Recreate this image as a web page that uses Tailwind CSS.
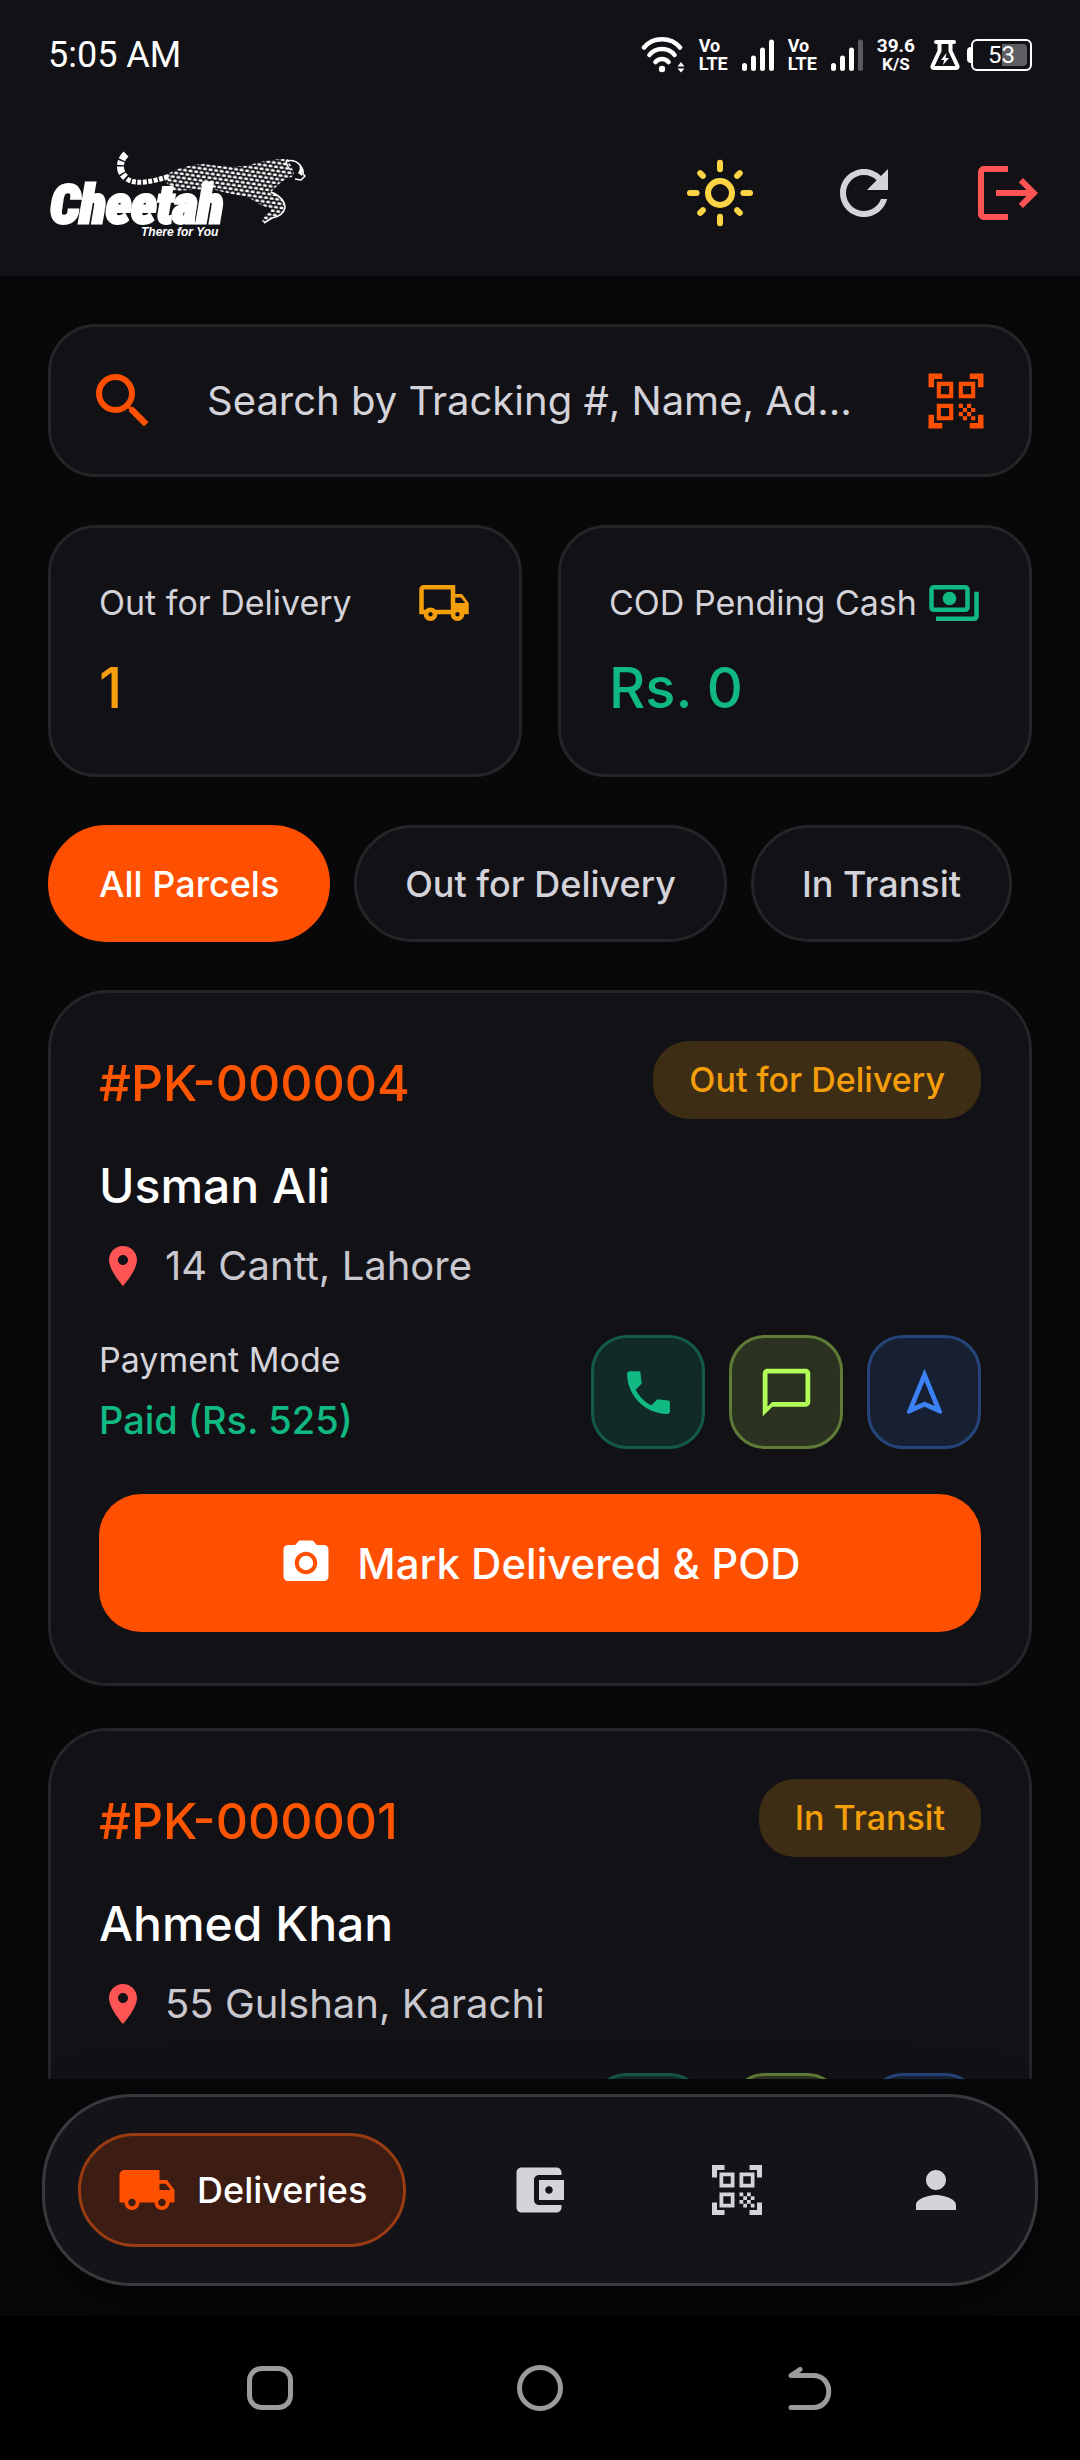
<!DOCTYPE html>
<html lang="en">
<head>
    <meta charset="UTF-8">
    <meta name="viewport" content="width=device-width, initial-scale=1.0">
    <title>Cheetah - Deliveries</title>
    <script src="https://cdn.jsdelivr.net/npm/@tailwindcss/browser@4"></script>
</head>
<body class="h-screen overflow-hidden flex flex-col bg-[#08080a] text-white font-[Inter,sans-serif]">

    <!-- Icon set -->
    <svg class="hidden" aria-hidden="true">
        <symbol id="i-search" viewBox="0 0 24 24"><path d="M15.5 14h-.79l-.28-.27A6.47 6.47 0 0 0 16 9.5 6.5 6.5 0 1 0 9.5 16c1.61 0 3.09-.59 4.23-1.57l.27.28v.79l5 4.99L20.49 19l-4.99-5zm-6 0C7.01 14 5 11.99 5 9.5S7.01 5 9.5 5 14 7.01 14 9.5 11.99 14 9.5 14z"/></symbol>
        <symbol id="i-qr" viewBox="0 0 24 24"><path d="M9.5 6.5v3h-3v-3h3M11 5H5v6h6V5zm-1.5 9.5v3h-3v-3h3M11 13H5v6h6v-6zm6.5-6.5v3h-3v-3h3M19 5h-6v6h6V5zm-6 8h1.5v1.5H13V13zm1.5 1.5H16V16h-1.5v-1.5zM16 13h1.5v1.5H16V13zm-3 3h1.5v1.5H13V16zm1.5 1.5H16V19h-1.5v-1.5zM16 16h1.5v1.5H16V16zm1.5-1.5H19V16h-1.5v-1.5zm0 3H19V19h-1.5v-1.5zM22 7h-2V4h-3V2h5v5zm0 15v-5h-2v3h-3v2h5zM2 22h5v-2H4v-3H2v5zM2 2v5h2V4h3V2H2z"/></symbol>
        <symbol id="i-pin" viewBox="0 0 24 24"><path d="M12 2C8.13 2 5 5.13 5 9c0 5.25 7 13 7 13s7-7.75 7-13c0-3.87-3.13-7-7-7zm0 9.5c-1.38 0-2.5-1.12-2.5-2.5s1.12-2.5 2.5-2.5 2.5 1.12 2.5 2.5-1.12 2.5-2.5 2.5z"/></symbol>
        <symbol id="i-phone" viewBox="0 0 24 24"><path d="M4 3h3.9c.4 0 .65.2.7.6l.55 4.65-2.53 2.54c1.44 2.83 3.76 5.14 6.59 6.59l2.52-2.52 4.5.5c.5.06.77.4.77.9V20c0 .55-.45 1-1 1C10.61 21 3 13.39 3 4c0-.55.45-1 1-1z"/></symbol>
        <symbol id="i-chat" viewBox="0 0 24 24"><path d="M20 2H4c-1.1 0-2 .9-2 2v18l4-4h14c1.1 0 2-.9 2-2V4c0-1.1-.9-2-2-2zm0 14H6l-2 2V4h16v12z"/></symbol>
        <symbol id="i-nav" viewBox="0 0 24 24"><path d="M12 7.27l4.28 10.43-3.47-1.53-.81-.36-.81.36-3.47 1.53L12 7.27M12 2L4.5 20.29l.71.71L12 18l6.79 3 .71-.71L12 2z"/></symbol>
        <symbol id="i-camera" viewBox="0 0 24 24"><circle cx="12" cy="12" r="3.2"/><path d="M9 2L7.17 4H4c-1.1 0-2 .9-2 2v12c0 1.1.9 2 2 2h16c1.1 0 2-.9 2-2V6c0-1.1-.9-2-2-2h-3.17L15 2H9zm3 15c-2.76 0-5-2.24-5-5s2.24-5 5-5 5 2.24 5 5-2.24 5-5 5z"/></symbol>
    </svg>

    <!-- Header -->
    <header class="bg-[#121116] shrink-0">
        <div class="h-[110px] px-12 flex items-center justify-between font-[Roboto,sans-serif]">
            <span class="text-[36px] leading-10">5:05 AM</span>
            <div class="flex items-center gap-3.5">
                <svg class="w-11 h-9" viewBox="0 0 44 36" fill="none" stroke="#fff" stroke-width="4.5" stroke-linecap="round">
                    <path d="M3 10.5C12-.5 30-.5 39 10.5M8.5 18C14.5 10 27.5 10 33.5 18M14.5 25C18 21 24 21 27.5 25"/>
                    <circle cx="21" cy="32" r="3.2" fill="#fff" stroke="none"/>
                    <path d="M36.5 29.5l3.500-4.500 3.500 4.500zM36.500 31.500l3.500 4 3.500-4z" fill="#fff" stroke="none"/>
                </svg>
                <span class="flex flex-col font-bold text-[18px] leading-[18px]"><span>Vo</span><span>LTE</span></span>
                <svg class="w-8 h-8" viewBox="0 0 32 32" stroke="#fff" stroke-width="5" stroke-linecap="round">
                    <path d="M2.5 26.5v3M11.5 19v10.5M20.5 11v18.5M29.5 3v26.5"/>
                </svg>
                <span class="flex flex-col font-bold text-[18px] leading-[18px]"><span>Vo</span><span>LTE</span></span>
                <svg class="w-8 h-8" viewBox="0 0 32 32" stroke="#fff" stroke-width="5" stroke-linecap="round">
                    <path d="M2.5 26.5v3M11.5 19v10.5M20.5 11v18.5"/><path d="M29.5 3v26.5" stroke="#5a595d"/>
                </svg>
                <span class="flex flex-col items-center font-bold text-[19px] leading-[18px]"><span>39.6</span><span class="text-[17px]">K/S</span></span>
                <div class="flex items-center gap-1.5">
                    <svg class="w-8 h-8" viewBox="0 0 32 32" fill="none" stroke="#fff" stroke-width="4" stroke-linejoin="round" stroke-linecap="round">
                        <path d="M7 3h18M10.500 3v9L3.500 27q-.5 2 1.500 2h22q2 0 1.500-2L21.500 12V3"/>
                        <path d="M17.500 14l-5.500 7h3l-1 5 6-7h-3.500z" fill="#fff" stroke="none"/>
                    </svg>
                    <div class="flex items-center">
                        <div class="w-1 h-4 rounded-l bg-white"></div>
                        <div class="w-[61px] h-8 rounded-md border-2 border-white p-[3px] flex">
                            <div class="flex-1 flex items-center justify-center rounded-sm bg-linear-to-r from-transparent from-50% to-[#5f5e62] to-50% text-[24px] leading-none">53</div>
                        </div>
                    </div>
                </div>
            </div>
        </div>

        <div class="h-[166px] pl-12 flex items-center justify-between">
            <svg class="w-[262px] h-[90px]" viewBox="48 147 262 90" role="img" aria-label="Cheetah, There for You">
                <defs>
                    <pattern id="coat" width="5.600" height="8" patternUnits="userSpaceOnUse" patternTransform="rotate(8)">
                        <rect x=".4" y=".4" width="4" height="2.700" rx="1.200" fill="#fff"/>
                        <rect x="-2.400" y="4.400" width="4" height="2.700" rx="1.200" fill="#fff"/>
                        <rect x="3.200" y="4.400" width="4" height="2.700" rx="1.200" fill="#fff"/>
                    </pattern>
                </defs>
                <path d="M126 153C119 160 118 170 126 177" fill="none" stroke="#fff" stroke-width="7" stroke-dasharray="7 1.500 4 1.500"/>
                <path d="M127 178C136 184 152 181 170 175" fill="none" stroke="#fff" stroke-width="5" stroke-dasharray="4 1.500"/>
                <path d="M163 176C172 169 186 164 205 163C215 165 238 167 250 164C262 160 274 158 288 158L294 172L292 176C285 177 280 182 271 191C280 194 286 200 285 207C284 213 277 216 272 217L265 222L262 220L265 214L271 210L270 207C262 205 256 202 250 197C238 194 226 192 212 188L172 190z" fill="url(#coat)"/>
                <path d="M286 160q9-2 14 4q4 5 3 9l2 2l-4 4l-6-1M286 160q1 6 5 9M271 191q14 6 14 16q-2 8-13 10l-8 5" fill="none" stroke="#fff" stroke-width="1.500"/>
                <path d="M299 163q5 6 3 12l-4-3q3-4 1-9z" fill="#fff"/>
                <text x="50" y="222" font-family="Liberation Sans Narrow, Roboto Condensed, sans-serif" font-size="54" font-weight="900" font-style="italic" fill="#fff" stroke="#fff" stroke-width="3">Cheetah</text>
                <text x="141" y="235" font-family="Liberation Sans, sans-serif" font-size="12" font-weight="700" font-style="italic" fill="#fff">There for You</text>
            </svg>
            <div class="flex">
                <button class="size-36 flex items-center justify-center" aria-label="Toggle theme">
                    <svg class="size-18" viewBox="0 0 24 24" fill="none" stroke="#fdd446" stroke-width="2" stroke-linecap="round">
                        <circle cx="12" cy="12" r="4"/>
                        <path d="M2 12h2.200M19.800 12H22M12 1.900v2.200M12 19.900v2.200M5.400 5.400l.9.900M17.700 17.700l.9.900M5.400 18.600l.9-.9M17.700 6.300l.9-.9"/>
                    </svg>
                </button>
                <button class="size-36 flex items-center justify-center" aria-label="Refresh">
                    <svg class="size-18 fill-[#d4d3da]" viewBox="0 0 24 24"><path d="M17.650 6.350C16.200 4.900 14.210 4 12 4c-4.420 0-7.990 3.580-7.990 8s3.570 8 7.990 8c3.730 0 6.840-2.550 7.730-6h-2.080c-.82 2.330-3.040 4-5.650 4-3.310 0-6-2.690-6-6s2.690-6 6-6c1.660 0 3.140.69 4.220 1.780L13 11h7V4l-2.350 2.350z"/></svg>
                </button>
                <button class="size-36 flex items-center justify-center" aria-label="Log out">
                    <svg class="size-18 fill-[#ff5454]" viewBox="0 0 24 24"><path d="M17 7l-1.410 1.410L18.170 11H8v2h10.170l-2.580 2.580L17 17l5-5zM4 5h8V3H4c-1.100 0-2 .9-2 2v14c0 1.100.9 2 2 2h8v-2H4V5z"/></svg>
                </button>
            </div>
        </div>
    </header>

    <main class="flex-1 min-h-0 overflow-hidden px-12 pt-12">
        <!-- Search -->
        <form class="h-[153px] pl-9 pr-10 flex items-center gap-12 bg-[#121116] border-3 border-[#252427] rounded-[48px]">
            <svg class="size-18 shrink-0 fill-[#ff4f00]"><use href="#i-search"/></svg>
            <input type="text" aria-label="Search parcels" placeholder="Search by Tracking #, Name, Ad…" class="flex-1 min-w-0 bg-transparent outline-none text-[40px] leading-14 placeholder:text-[#d4d3da] placeholder:opacity-100">
            <button type="button" aria-label="Scan code" class="shrink-0"><svg class="size-[66px] fill-[#ff4f00]"><use href="#i-qr"/></svg></button>
        </form>

        <!-- Stats -->
        <div class="mt-12 grid grid-cols-2 gap-9">
            <div class="p-12 bg-[#121116] border-3 border-[#252427] rounded-[48px]">
                <div class="flex items-center justify-between text-[34px] leading-[54px] text-[#d4d3da]">
                    <span class="whitespace-nowrap">Out for Delivery</span>
                    <svg class="size-[54px] shrink-0 fill-[#f59e0b]" viewBox="0 0 24 24"><path d="M20 8h-3V4H3c-1.100 0-2 .9-2 2v11h2c0 1.660 1.340 3 3 3s3-1.340 3-3h6c0 1.660 1.340 3 3 3s3-1.340 3-3h2v-5l-3-4zm-.5 1.500l1.960 2.500H17V9.500h2.500zM6 18c-.55 0-1-.45-1-1s.45-1 1-1 1 .45 1 1-.45 1-1 1zm2.220-3c-.55-.61-1.330-1-2.220-1s-1.670.39-2.220 1H3V6h12v9H8.220zM18 18c-.55 0-1-.45-1-1s.45-1 1-1 1 .45 1 1-.45 1-1 1z"/></svg>
                </div>
                <div class="mt-5 text-[56px] leading-19 font-medium text-[#f59e0b]">1</div>
            </div>
            <div class="p-12 bg-[#121116] border-3 border-[#252427] rounded-[48px]">
                <div class="flex items-center justify-between text-[34px] leading-[54px] text-[#d4d3da]">
                    <span class="whitespace-nowrap">COD Pending Cash</span>
                    <svg class="size-[54px] shrink-0 fill-[#10b981]" viewBox="0 0 24 24"><path d="M19 14V6c0-1.100-.9-2-2-2H3c-1.100 0-2 .9-2 2v8c0 1.100.9 2 2 2h14c1.100 0 2-.9 2-2zm-2 0H3V6h14v8zm-7-7c-1.660 0-3 1.340-3 3s1.340 3 3 3 3-1.340 3-3-1.340-3-3-3zm13 0v11c0 1.100-.9 2-2 2H4v-2h17V7h2z"/></svg>
                </div>
                <div class="mt-5 text-[56px] leading-19 font-medium text-[#10b981]">Rs. 0</div>
            </div>
        </div>

        <!-- Filters -->
        <div class="mt-12 flex gap-6 text-[36px] leading-12 font-medium whitespace-nowrap">
            <button class="h-[117px] px-12 rounded-full border-3 border-[#ff4f00] bg-[#ff4f00]">All Parcels</button>
            <button class="h-[117px] px-12 rounded-full border-3 border-[#252427] bg-[#121116] text-[#d4d3da]">Out for Delivery</button>
            <button class="h-[117px] px-12 rounded-full border-3 border-[#252427] bg-[#121116] text-[#d4d3da]">In Transit</button>
        </div>

        <!-- Parcels -->
        <div class="mt-12 flex flex-col gap-[42px]">
            <article class="p-12 bg-[#121116] border-3 border-[#252427] rounded-[60px]">
                <div class="flex items-end justify-between">
                    <span class="text-[50px] leading-18 font-medium text-[#ff5500]">#PK-000004</span>
                    <span class="px-9 rounded-[36px] bg-[#3d2d14] text-[34px] leading-[78px] font-medium text-[#f59e0b]">Out for Delivery</span>
                </div>
                <h2 class="mt-9 text-[48px] leading-[62px] font-medium">Usman Ali</h2>
                <p class="mt-[22px] flex items-center gap-[18px] text-[40px] leading-[54px] text-[#c9c8cf]">
                    <svg class="size-12 fill-[#ff5454]"><use href="#i-pin"/></svg>14 Cantt, Lahore
                </p>
                <div class="mt-[42px] flex items-center justify-between">
                    <div class="flex flex-col gap-3">
                        <span class="text-[34px] leading-11 text-[#d4d3da]">Payment Mode</span>
                        <span class="text-[38px] leading-13 font-medium text-[#10b981]">Paid (Rs. 525)</span>
                    </div>
                    <div class="flex gap-6">
                        <button aria-label="Call" class="size-[114px] flex items-center justify-center rounded-[36px] bg-[#122a26] border-3 border-[#14594a]"><svg class="size-[57px] fill-[#10b981]"><use href="#i-phone"/></svg></button>
                        <button aria-label="Message" class="size-[114px] flex items-center justify-center rounded-[36px] bg-[#2b3320] border-3 border-[#607b38]"><svg class="size-[57px] fill-[#b2ff59]"><use href="#i-chat"/></svg></button>
                        <button aria-label="Navigate" class="size-[114px] flex items-center justify-center rounded-[36px] bg-[#172033] border-3 border-[#26437a]"><svg class="size-[57px] fill-[#3b82f6]"><use href="#i-nav"/></svg></button>
                    </div>
                </div>
                <button class="mt-[45px] mb-[3px] w-full h-[138px] flex items-center justify-center gap-6 rounded-[42px] bg-[#ff4f00] text-[42px] font-medium">
                    <svg class="size-[54px] fill-white"><use href="#i-camera"/></svg>Mark Delivered &amp; POD
                </button>
            </article>

            <article class="p-12 bg-[#121116] border-3 border-[#252427] rounded-[60px]">
                <div class="flex items-end justify-between">
                    <span class="text-[50px] leading-18 font-medium text-[#ff5500]">#PK-000001</span>
                    <span class="px-9 rounded-[36px] bg-[#3d2d14] text-[34px] leading-[78px] font-medium text-[#f59e0b]">In Transit</span>
                </div>
                <h2 class="mt-9 text-[48px] leading-[62px] font-medium">Ahmed Khan</h2>
                <p class="mt-[22px] flex items-center gap-[18px] text-[40px] leading-[54px] text-[#c9c8cf]">
                    <svg class="size-12 fill-[#ff5454]"><use href="#i-pin"/></svg>55 Gulshan, Karachi
                </p>
                <div class="mt-[42px] flex items-center justify-end gap-6">
                    <button aria-label="Call" class="size-[114px] rounded-[36px] bg-[#122a26] border-3 border-[#14594a]"></button>
                    <button aria-label="Message" class="size-[114px] rounded-[36px] bg-[#2b3320] border-3 border-[#607b38]"></button>
                    <button aria-label="Navigate" class="size-[114px] rounded-[36px] bg-[#172033] border-3 border-[#26437a]"></button>
                </div>
            </article>
        </div>
    </main>

    <!-- Bottom navigation -->
    <div class="shrink-0 px-[42px] pt-[15px] pb-[30px]">
        <nav class="relative h-48 px-[33px] flex items-center justify-between rounded-[90px] bg-[#141318] border-3 border-[#39383c] shadow-[0_24px_60px_rgba(0,0,0,0.5)]">
            <a href="#" class="h-[114px] px-9 flex items-center gap-5 rounded-full bg-[#3d1c14] border-3 border-[#9a3c12] text-[36px] font-medium">
                <svg class="size-15 fill-[#ff4f00]" viewBox="0 0 24 24"><path d="M20 8h-3V4H3c-1.100 0-2 .9-2 2v11h2c0 1.660 1.340 3 3 3s3-1.340 3-3h6c0 1.660 1.340 3 3 3s3-1.340 3-3h2v-5l-3-4zM6 18.500c-.83 0-1.500-.67-1.500-1.500s.67-1.500 1.500-1.500 1.500.67 1.500 1.500-.67 1.500-1.500 1.500zm13.500-9l1.960 2.500H17V9.500h2.500zm-1.500 9c-.83 0-1.500-.67-1.500-1.500s.67-1.500 1.500-1.500 1.500.67 1.500 1.500-.67 1.500-1.500 1.500z"/></svg>Deliveries
            </a>
            <a href="#" aria-label="Wallet" class="px-9 py-6">
                <svg class="size-15 fill-[#d4d3da]" viewBox="0 0 24 24"><path d="M21 18v1c0 1.100-.9 2-2 2H5c-1.110 0-2-.9-2-2V5c0-1.100.89-2 2-2h14c1.100 0 2 .9 2 2v1h-9c-1.110 0-2 .9-2 2v8c0 1.100.89 2 2 2h9zm-9-2h10V8H12v8zm4-2.500c-.83 0-1.500-.67-1.500-1.500s.67-1.500 1.500-1.500 1.500.67 1.500 1.500-.67 1.500-1.500 1.500z"/></svg>
            </a>
            <a href="#" aria-label="Scan" class="px-9 py-6">
                <svg class="size-15 fill-[#d4d3da]"><use href="#i-qr"/></svg>
            </a>
            <a href="#" aria-label="Profile" class="px-9 py-6">
                <svg class="size-15 fill-[#d4d3da]" viewBox="0 0 24 24"><path d="M12 12c2.210 0 4-1.790 4-4s-1.790-4-4-4-4 1.790-4 4 1.790 4 4 4zm0 2c-2.670 0-8 1.340-8 4v2h16v-2c0-2.660-5.330-4-8-4z"/></svg>
            </a>
        </nav>
    </div>

    <!-- System buttons -->
    <footer class="relative shrink-0 h-36 px-[135px] grid grid-cols-3 place-items-center bg-black">
        <button aria-label="Recent apps"><svg class="size-12" viewBox="0 0 48 48" fill="none" stroke="#9b9b9b" stroke-width="5"><rect x="3.500" y="4.500" width="41" height="39" rx="12"/></svg></button>
        <button aria-label="Home"><svg class="size-12" viewBox="0 0 48 48" fill="none" stroke="#9b9b9b" stroke-width="5"><circle cx="24" cy="24" r="20.500"/></svg></button>
        <button aria-label="Back"><svg class="size-12" viewBox="0 0 48 48" fill="none" stroke="#9b9b9b" stroke-width="5" stroke-linecap="round" stroke-linejoin="round"><path d="M14 5.500L5 11.500H27C48 11.500 48 43.500 27 43.500H5"/></svg></button>
    </footer>
</body>
</html>
